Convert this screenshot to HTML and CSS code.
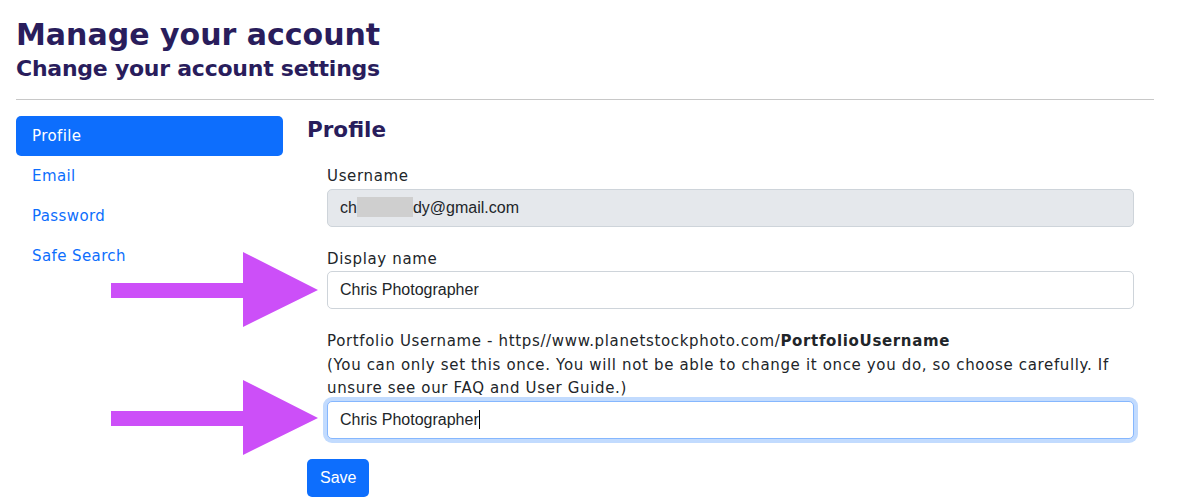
FILE: index.html
```html
<!DOCTYPE html>
<html lang="en">
<head>
  <meta charset="UTF-8">
  <meta name="viewport" content="width=device-width, initial-scale=1.0">
  <title>Manage your account</title>
  <link rel="stylesheet" href="styles.css">
</head>
<body>
<div class="page">
  <header class="head">
    <h1>Manage your account</h1>
    <h2>Change your account settings</h2>
  </header>
  <hr class="rule">
  <div class="layout">
    <nav class="side">
      <a href="#" class="active">Profile</a>
      <a href="#">Email</a>
      <a href="#">Password</a>
      <a href="#">Safe Search</a>
    </nav>
    <main class="main">
      <h3>Profile</h3>
      <form class="form">
        <div class="field">
          <label>Username</label>
          <div class="input disabled">ch<span class="blur"></span>dy@gmail.com</div>
        </div>
        <div class="field">
          <label>Display name</label>
          <div class="input">Chris Photographer</div>
        </div>
        <div class="field">
          <label>Portfolio Username - https//www.planetstockphoto.com/<b>PortfolioUsername</b><br>
          (You can only set this once. You will not be able to change it once you do, so choose carefully. If unsure see our FAQ and User Guide.)</label>
          <div class="input focus">Chris Photographer<span class="caret"></span></div>
        </div>
      </form>
      <button class="save">Save</button>
    </main>
  </div>

  <!-- annotation arrows -->
  <svg class="arrow arrow1" width="210" height="78" viewBox="0 0 210 78">
    <polygon points="0,31 132,31 132,0 207,38 132,75 132,46 0,46" fill="#cc4ff8"/>
  </svg>
  <svg class="arrow arrow2" width="210" height="78" viewBox="0 0 210 78">
    <polygon points="0,31 132,31 132,0 207,38 132,75 132,46 0,46" fill="#cc4ff8"/>
  </svg>
</div>
</body>
</html>
```

FILE: styles.css
```css
* {
  box-sizing: border-box;
}
body {
  margin: 0;
  font-family: "DejaVu Sans", sans-serif;
  color: #212529;
  background: #fff;
}
.page {
  position: relative;
  padding: 15px 26px 0 16px;
}
.head h1 {
  margin: 0;
  font-size: 30px;
  line-height: 40px;
  font-weight: 800;
  color: #291d5c;
}
.head h2 {
  margin: 0;
  font-size: 22px;
  line-height: 28px;
  font-weight: 800;
  color: #291d5c;
  letter-spacing: -0.25px;
}
.rule {
  border: 0;
  border-top: 1px solid #c8c8c8;
  margin: 16px 0 16px;
}
.layout {
  display: flex;
  gap: 24px;
}
.side {
  width: 267px;
  flex-shrink: 0;
  display: flex;
  flex-direction: column;
}
.side a {
  display: block;
  height: 40px;
  line-height: 40px;
  padding: 0 16px;
  font-size: 15px;
  letter-spacing: 0.4px;
  color: #0d6efd;
  text-decoration: none;
  border-radius: 5px;
}
.side a.active {
  background: #0d6efd;
  color: #fff;
}
.main {
  flex: 1;
}
.main h3 {
  margin: 0 0 21px;
  font-size: 21.5px;
  line-height: 28px;
  font-weight: 800;
  color: #291d5c;
}
.form {
  padding: 0 20px;
}
.field {
  margin-bottom: 21px;
}
.field label {
  display: block;
  font-size: 15px;
  line-height: 23.5px;
  letter-spacing: 0.65px;
}
.input {
  height: 38px;
  border: 1px solid #ced4da;
  border-radius: 5px;
  padding: 0 12px;
  font-family: "Liberation Sans", Arial, sans-serif;
  font-size: 16px;
  line-height: 36px;
  background: #fff;
}
.input.disabled {
  background: #e5e8ec;
}
.input.focus {
  border-color: #86b7fe;
  box-shadow: 0 0 0 4px #c2dbfe;
}
.blur {
  display: inline-block;
  width: 56px;
  height: 20px;
  background: #cfcfcf;
  vertical-align: -4px;
}
.caret {
  display: inline-block;
  width: 1px;
  height: 19px;
  background: #000;
  vertical-align: -4px;
}
.save {
  margin-top: -1px;
  height: 38px;
  padding: 0 13px;
  border: 0;
  border-radius: 5px;
  background: #0d6efd;
  color: #fff;
  font-family: "Liberation Sans", Arial, sans-serif;
  font-size: 16px;
}
.arrow {
  position: absolute;
  left: 111px;
}
.arrow1 {
  top: 252px;
}
.arrow2 {
  top: 380px;
}
```
